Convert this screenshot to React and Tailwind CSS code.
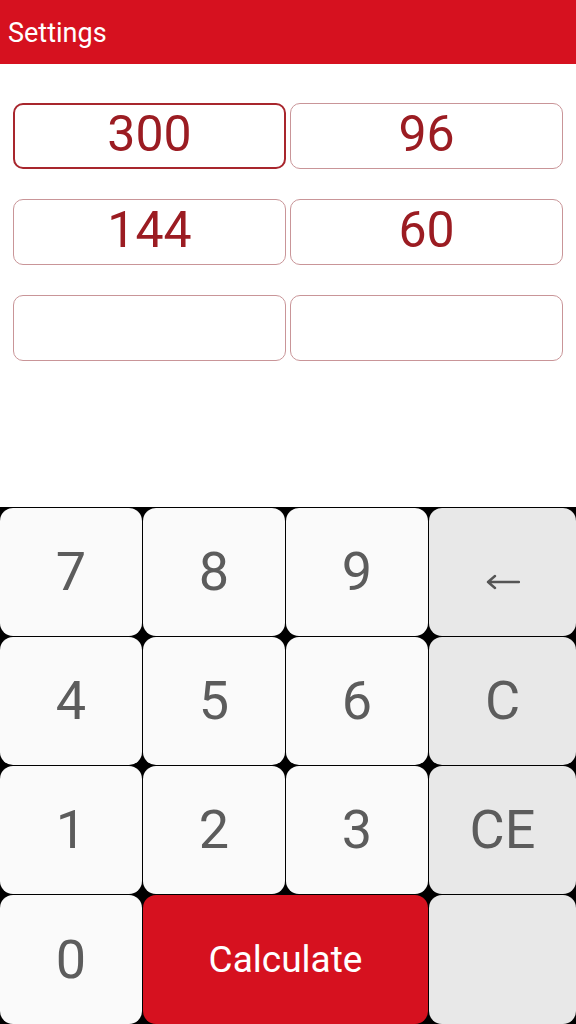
import React from "react";

const font = { fontFamily: "Roboto, 'Liberation Sans', sans-serif" };

function Field({ value, focused }) {
  return (
    <div
      className={
        "h-[66px] rounded-[10px] flex items-center justify-center pb-[5px] text-[50px] leading-none text-[#9b1c22] bg-white " +
        (focused ? "border-2 border-[#a8262d]" : "border border-[#c99598]")
      }
    >
      {value}
    </div>
  );
}

function Key({ children, dark, className = "" }) {
  return (
    <div
      className={
        "rounded-[13px] flex items-center justify-center text-[54px] leading-none text-[#5c5c5c] " +
        (dark ? "bg-[#e8e8e8] " : "bg-[#fafafa] ") +
        className
      }
    >
      {children}
    </div>
  );
}

function BackArrow() {
  return (
    <svg width="34" height="16" viewBox="0 0 34 16" className="mt-[20px]">
      <path
        d="M2 8 H33 M2 8 L9 2 M2 8 L9 14"
        stroke="#555"
        strokeWidth="2.4"
        fill="none"
        strokeLinecap="round"
      />
    </svg>
  );
}

export default function App() {
  return (
    <div className="w-[576px] h-[1024px] flex flex-col bg-white overflow-hidden" style={font}>
      <header className="h-16 bg-[#d6111f] flex items-center px-2 pt-[3px]">
        <span className="text-white text-[27px] leading-none">Settings</span>
      </header>

      <main className="h-[443px] px-[13px] pt-[39px]">
        <div className="grid grid-cols-2 gap-x-1 gap-y-[30px]">
          <Field value="300" focused />
          <Field value="96" />
          <Field value="144" />
          <Field value="60" />
          <Field value="" />
          <Field value="" />
        </div>
      </main>

      <div className="flex-1 bg-black pt-px grid grid-cols-[142px_142px_142px_1fr] grid-rows-[128px_128px_128px_1fr] gap-px">
        <Key>7</Key>
        <Key>8</Key>
        <Key>9</Key>
        <Key dark>
          <BackArrow />
        </Key>
        <Key>4</Key>
        <Key>5</Key>
        <Key>6</Key>
        <Key dark>C</Key>
        <Key>1</Key>
        <Key>2</Key>
        <Key>3</Key>
        <Key dark>CE</Key>
        <Key>0</Key>
        <div className="col-span-2 rounded-[13px] bg-[#d6111f] flex items-center justify-center text-white text-[37px] leading-none">
          Calculate
        </div>
        <Key dark />
      </div>
    </div>
  );
}
